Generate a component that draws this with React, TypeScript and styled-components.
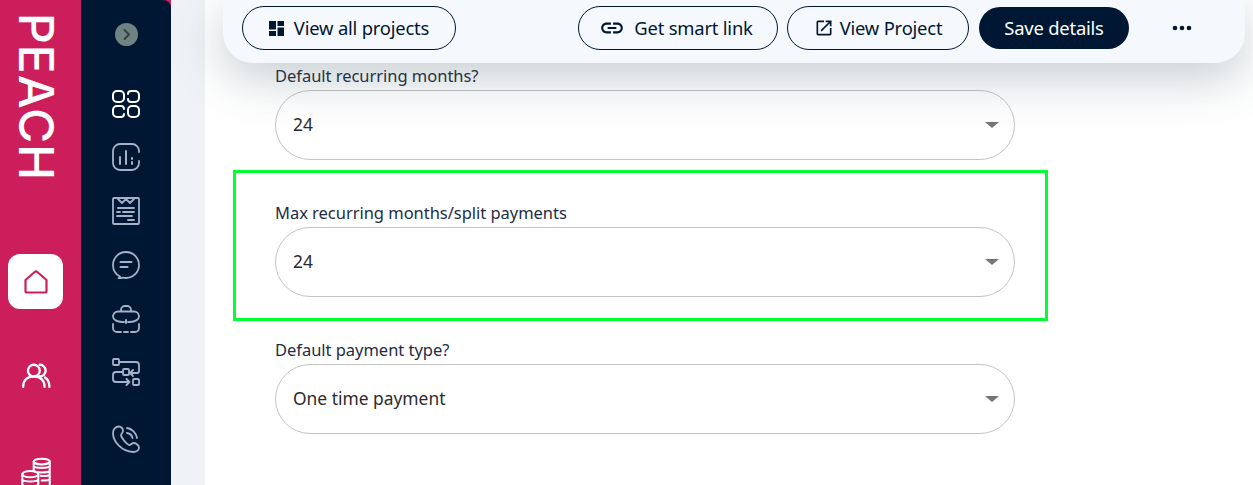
import React from "react";
import styled, { createGlobalStyle } from "styled-components";

const Global = createGlobalStyle`
  html, body { margin: 0; padding: 0; background: #fff; height: 485px; overflow: hidden; }
  body { font-family: "Noto Sans", "Liberation Sans", sans-serif; }
`;

const Page = styled.div`display: flex; height: 485px; overflow: hidden; background: #fff;`;
const Rail = styled.aside`width: 81px; box-sizing: border-box; padding: 0 18px 0 8px; flex: none; background: #cc1e5b; display: flex; flex-direction: column; align-items: center;`;
const Logo = styled.div`
  writing-mode: vertical-rl; font-family: Inter, sans-serif; font-size: 48px; font-weight: 500; line-height: 36px; flex: none;
  letter-spacing: 1px; color: #fff; margin-top: 13px; height: 241px; width: 36px; align-self: flex-start; margin-left: 10px;
`;
const RailHome = styled.div`width: 55px; height: 55px; flex: none; border-radius: 12px; background: #fff; color: #cc1e5b; display: flex; align-items: center; justify-content: center;`;
const RailIcon = styled.div<{ $top: number }>`margin-top: ${p => p.$top}px; color: #fff; display: flex; flex: none;`;
const NavSlot = styled.div`width: 90px; flex: none; background: #cc1e5b; display: flex;`;
const Nav = styled.nav`flex: 1; background: #001733; border-top-right-radius: 8px; display: flex; flex-direction: column; align-items: center;`;
const Toggle = styled.div`width: 23px; height: 23px; margin-top: 23px; margin-bottom: 44px; border-radius: 50%; background: #6f8383; color: #33403f; display: flex; align-items: center; justify-content: center;`;
const NavIcon = styled.div<{ $top: number; $active?: boolean }>`margin-top: ${p => p.$top}px; height: 28px; color: ${p => (p.$active ? "#fff" : "#a3b1c9")}; display: flex;`;
const Gutter = styled.div`width: 34px; flex: none; background: #eff3f8;`;
const Main = styled.main`flex: 1; min-width: 0; padding-left: 18px;`;
const Toolbar = styled.div`
  position: relative; z-index: 2; width: 1022px; height: 63px; box-sizing: border-box; background: #f5f8fd;
  border-radius: 0 0 30px 30px; box-shadow: 0 14px 50px rgba(60, 85, 95, .3);
  display: flex; align-items: center; padding: 0 37px 7px 19px;
`;
const Pill = styled.button<{ $w: number; $solid?: boolean; $shift?: number }>`
  width: ${p => p.$w}px; height: ${p => (p.$solid ? 42 : 44)}px; box-sizing: border-box; border-radius: 22px; display: flex; align-items: center; justify-content: center;
  font: 400 18.4px "Noto Sans", sans-serif; letter-spacing: -.2px; padding: 0 ${p => p.$shift ?? 0}px 2px 0; flex: none;
  color: ${p => (p.$solid ? "#fff" : "#001733")}; background: ${p => (p.$solid ? "#001733" : "transparent")};
  border: ${p => (p.$solid ? "none" : "1px solid #001733")};
`;
const PillLabel = styled.span<{ $gap: number }>`margin-left: ${p => p.$gap}px;`;
const PillIcon = styled.svg`flex: none; fill: currentColor; margin-top: 2px;`;
const Spacer = styled.div`flex: 1;`;
const Gap = styled.div<{ $w: number }>`width: ${p => p.$w}px; flex: none;`;
const More = styled.div`width: 53px; margin-left: 26px; color: #001733; display: flex; justify-content: center;`;
const Content = styled.div`margin-left: 10px; width: 815px;`;
const Field = styled.div<{ $outlined?: boolean; $top: number }>`
  box-sizing: border-box; margin-top: ${p => p.$top}px; padding: 0 31px 0 ${p => (p.$outlined ? 39 : 42)}px;
  ${p => p.$outlined && "border: 3px solid #00ff33; height: 151px; padding-top: 30px;"}
`;
const Label = styled.label`display: block; font-size: 16.5px; line-height: 20px; letter-spacing: -.03px; color: #1d2d44; margin-bottom: 4px;`;
const Select = styled.div`
  width: 740px; height: 70px; box-sizing: border-box; border: 1px solid #c4c4c4; border-radius: 35px; padding: 0 15px 3px 17px;
  display: flex; align-items: center; justify-content: space-between; font-size: 17.4px; color: #2b2b2b;
`;
const Caret = styled.span`width: 0; height: 0; border-left: 7px solid transparent; border-right: 7px solid transparent; border-top: 6px solid #757575; margin-top: 3px;`;

const S = { fill: "none", stroke: "currentColor", strokeWidth: 1.8, strokeLinecap: "round" as const, strokeLinejoin: "round" as const };
const Ico: React.FC<{ children: React.ReactNode; size?: number }> = ({ children, size = 28 }) => (
  <svg width={size} height={size} viewBox="0 0 28 28" {...S}>{children}</svg>
);

const SelectField: React.FC<{ label: string; value: string; outlined?: boolean; top: number }> = ({ label, value, outlined, top }) => (
  <Field $outlined={outlined} $top={top}>
    <Label>{label}</Label>
    <Select>{value}<Caret /></Select>
  </Field>
);

export default function App() {
  return (
    <Page>
      <Global />
      <Rail>
        <Logo>PEACH</Logo>
        <RailHome>
          <Ico><path d="M3.500 12 12.700 4a2 2 0 0 1 2.600 0l9.200 8v11a1.500 1.500 0 0 1-1.500 1.500H5A1.500 1.500 0 0 1 3.500 23z" strokeWidth="2.200" /></Ico>
        </RailHome>
        <RailIcon $top={52}>
          <Ico size={30}>
            <circle cx="12" cy="9" r="5.500" strokeWidth="2.200" />
            <path d="M2 24c0-6 4-9.500 10-9.500S22 18 22 24" strokeWidth="2.200" />
            <path d="M17.500 3.500a5.500 5.500 0 0 1 0 11M22.500 15.500c2.600 1.500 4 4.600 4 8.500" strokeWidth="2.200" />
          </Ico>
        </RailIcon>
        <RailIcon $top={66}>
          <Ico size={32}>
            <ellipse cx="19" cy="4" rx="7" ry="2.500" />
            <path d="M12 4v8M26 4v24M12 8c1 2 13 2 14 0M12 12c1 2 13 2 14 0M18 16.500c3 .5 7 0 8-1M19 20.500c3 .3 6 0 7-1" />
            <ellipse cx="9" cy="15" rx="7" ry="2.800" />
            <path d="M2 15v13M16 15v13M2 19.500c1 2.500 13 2.500 14 0M2 24c1 2.500 13 2.500 14 0" />
          </Ico>
        </RailIcon>
      </Rail>
      <NavSlot>
        <Nav>
          <Toggle>
            <svg width="13" height="13" viewBox="0 0 13 13" fill="none" stroke="currentColor" strokeWidth="2" strokeLinecap="round" strokeLinejoin="round"><path d="m4.500 2 4.500 4.500-4.500 4.500" /></svg>
          </Toggle>
          <NavIcon $top={0} $active>
            <Ico>
              <g strokeWidth="2">
                <rect x="1" y="1" width="11" height="11" rx="4" />
                <path d="M16 4a3 3 0 0 1 3-3h4a4 4 0 0 1 4 4v3a4 4 0 0 1-4 4h-4a3 3 0 0 1-3-3" />
                <path d="M12 24a3 3 0 0 1-3 3H5a4 4 0 0 1-4-4v-3a4 4 0 0 1 4-4h4a3 3 0 0 1 3 3" />
                <rect x="16" y="16" width="11" height="11" rx="4" />
              </g>
            </Ico>
          </NavIcon>
          <NavIcon $top={25}>
            <Ico>
              <path d="M27 9V8a7 7 0 0 0-7-7H8a7 7 0 0 0-7 7v12a7 7 0 0 0 7 7h12a7 7 0 0 0 7-7v-2" />
              <path d="M8 14v7M14 8v13M20 15v1M20 19v2" strokeWidth="2" />
            </Ico>
          </NavIcon>
          <NavIcon $top={26}>
            <Ico>
              <rect x="1" y="1" width="26" height="26" rx="1" />
              <path d="m6 2 4 4 4-4 4 4 4-4M6 11h16M5 15h3M11 15h11M5 19h15M16 23h6" />
            </Ico>
          </NavIcon>
          <NavIcon $top={26}>
            <Ico>
              <path d="M8 25.500C3.800 23.500 1 19.200 1 14 1 6.800 6.800 1 14 1s13 5.800 13 13-5.800 13-13 13c-1 0-2-.1-3-.4L6.500 27.500z" />
              <path d="M8.500 11h11M8.500 16h7" strokeWidth="2" />
            </Ico>
          </NavIcon>
          <NavIcon $top={26}>
            <Ico>
              <path d="M9 6V5a4 4 0 0 1 4-4h2a4 4 0 0 1 4 4v1" />
              <path d="M12 17h-2C5 17 1 14.500 1 11.500a5 5 0 0 1 5-5h16a5 5 0 0 1 5 5c0 3-4 5.500-9 5.500h-2" />
              <path d="M14 15v3" strokeWidth="2" />
              <path d="M1 19v4a4 4 0 0 0 4 4h4M27 19v4a4 4 0 0 1-4 4h-4M12 27h4" />
            </Ico>
          </NavIcon>
          <NavIcon $top={25}>
            <Ico>
              <rect x="1" y="1" width="6" height="6" rx="1" />
              <path d="M7 4h17a3 3 0 0 1 3 3v6a2 2 0 0 1-2 2h-6" />
              <path d="m21 12-3 3 3 3" />
              <rect x="11" y="11" width="6" height="6" rx="1" />
              <path d="M11 14H4a3 3 0 0 0-3 3v4a3 3 0 0 0 3 3h13" />
              <path d="m14.500 21 3 3-3 3" />
              <rect x="21" y="21" width="6" height="6" rx="1" />
            </Ico>
          </NavIcon>
          <NavIcon $top={39}>
            <Ico>
              <path d="M7 1.500c-3.500 0-6 3-6 6.500C1 17 10 26.500 21 27c3.500 0 6-2 6-4.500 0-2-3-4.500-5-4.500-2.500 0-3.500 2.500-5 2-2.500-1-7.500-7-8-9.500-.3-1.500 2-2.500 2-5C11 3.500 9 1.500 7 1.500z" />
              <path d="M15 3c4.500.5 9 4.500 10 10M15 8c3 .5 5 2.500 5.500 5" />
            </Ico>
          </NavIcon>
        </Nav>
      </NavSlot>
      <Gutter />
      <Main>
        <Toolbar>
          <Pill $w={214}>
            <PillIcon width="15" height="15" viewBox="0 0 15 15"><path d="M0 0h7v8.500H0zM8.500 0H15v5H8.500zM8.500 6.500H15V15H8.500zM0 10h7v5H0z" /></PillIcon>
            <PillLabel $gap={10}>View all projects</PillLabel>
          </Pill>
          <Spacer />
          <Pill $w={200} $shift={4}>
            <PillIcon width="26" height="26" viewBox="0 0 24 24"><path d="M3.900 12c0-1.710 1.390-3.100 3.100-3.100h4V7H7c-2.760 0-5 2.240-5 5s2.240 5 5 5h4v-1.900H7c-1.710 0-3.100-1.390-3.100-3.100zM8 13h8v-2H8v2zm9-6h-4v1.900h4c1.710 0 3.100 1.390 3.100 3.100s-1.390 3.100-3.100 3.100h-4V17h4c2.760 0 5-2.240 5-5s-2.240-5-5-5z" /></PillIcon>
            <PillLabel $gap={9}>Get smart link</PillLabel>
          </Pill>
          <Gap $w={9} />
          <Pill $w={182}>
            <PillIcon width="20" height="20" viewBox="0 0 24 24"><path d="M19 19H5V5h7V3H5c-1.110 0-2 .9-2 2v14c0 1.100.89 2 2 2h14c1.100 0 2-.9 2-2v-7h-2v7zM14 3v2h3.590l-9.830 9.830 1.410 1.410L19 6.410V10h2V3h-7z" /></PillIcon>
            <PillLabel $gap={6}>View Project</PillLabel>
          </Pill>
          <Gap $w={10} />
          <Pill $solid $w={150}>Save details</Pill>
          <More>
            <svg width="28" height="28" viewBox="0 0 24 24" fill="currentColor"><circle cx="6" cy="12" r="2" /><circle cx="12" cy="12" r="2" /><circle cx="18" cy="12" r="2" /></svg>
          </More>
        </Toolbar>
        <Content>
          <SelectField label="Default recurring months?" value="24" top={3} />
          <SelectField label="Max recurring months/split payments" value="24" outlined top={10} />
          <SelectField label="Default payment type?" value="One time payment" top={19} />
        </Content>
      </Main>
    </Page>
  );
}
